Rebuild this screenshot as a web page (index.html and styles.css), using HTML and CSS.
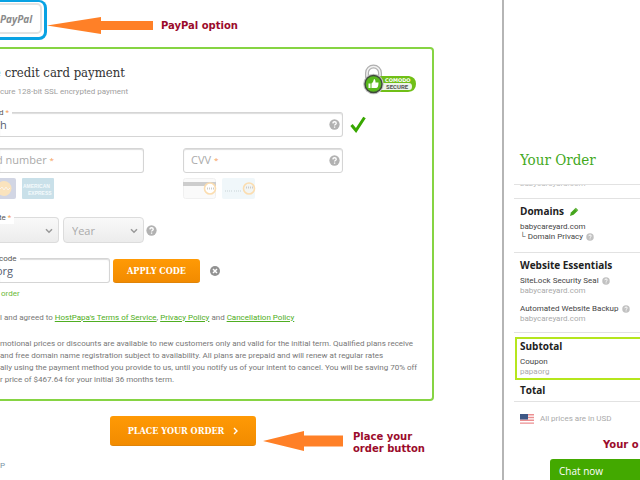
FILE: index.html
```
<!DOCTYPE html>
<html lang="en">
<head>
<meta charset="utf-8">
<title>Checkout</title>
<link rel="stylesheet" href="styles.css">
</head>
<body>
<svg class="defs" aria-hidden="true">
  <symbol id="help" viewBox="0 0 12 12"><circle cx="6" cy="6" r="5.6" fill="#b2b2b2"/><path d="M4.2 4.8Q4.3 3 6.1 3 7.9 3 7.9 4.5 7.9 5.4 6.9 6 6.1 6.4 6.1 7.2M6.1 8.2V9.5" fill="none" stroke="#fff" stroke-width="1.5"/></symbol>
  <symbol id="chevron" viewBox="0 0 8 6"><path d="M1 1.2 4 4.2 7 1.2" fill="none" stroke="#999" stroke-width="1.5"/></symbol>
</svg>
<div class="page">
  <main class="checkout">
    <div class="methods">
      <div class="highlight"><button class="paypal" type="button">PayPal</button></div>
      <svg class="arrow-top" viewBox="0 0 106 18" aria-hidden="true"><path d="M0 8.5 54 0V4H106V13H54V17Z" fill="#ff8027"/></svg>
      <strong class="note">PayPal option</strong>
    </div>
    <form class="card">
      <header class="card-head">
        <div>
          <h1><span class="tail">e</span> credit card payment</h1>
          <p class="sub">cure 128-bit SSL encrypted payment</p>
        </div>
        <svg class="badge" viewBox="0 0 54 32" role="img" aria-label="Comodo Secure">
          <path d="M4 16V9a6.500 6.500 0 0 1 13 0v7" fill="none" stroke="#b0b0b0" stroke-width="4"/>
          <path d="M4 16V9a6.500 6.500 0 0 1 13 0v7" fill="none" stroke="#f2f2f2" stroke-width="1.500"/>
          <path d="M12 12H46Q53 13 53 20T45 28H12Z" fill="#70bf17"/>
          <path d="M17 19H46Q49 19 49 22.500T46 26H17Z" fill="#eef4e9"/>
          <circle cx="10.500" cy="20" r="10.300" fill="#c3c3c3"/>
          <circle cx="10.500" cy="20" r="9.200" fill="#3e493b"/>
          <circle cx="10.500" cy="20" r="7.800" fill="#58b81d"/>
          <path d="M5.500 19.500H7.500V24H5.500ZM8.500 19.500 10 18 11 15Q12.500 15 12.500 18.500H15.500Q15.500 24 13 24H8.500Z" fill="#fff"/>
          <text x="22" y="18" class="badge-top">COMODO</text>
          <text x="23" y="25" class="badge-low">SECURE</text>
        </svg>
      </header>

      <div class="row">
        <div class="field wide">
          <input id="name" type="text" value="th">
          <label class="notch" for="name">d <i>*</i></label>
          <svg class="help inside"><use href="#help"/></svg>
        </div>
        <svg class="tick" viewBox="0 0 16 17" aria-hidden="true"><path d="M1.500 9 6 14.500 14.500 1.500" fill="none" stroke="#38a700" stroke-width="3"/></svg>
      </div>

      <div class="row pair">
        <div class="field number">
          <input id="number" type="text">
          <label class="hint" for="number">d number <i>*</i></label>
        </div>
        <div class="field cvv">
          <input id="cvv" type="text">
          <label class="hint" for="cvv">CVV <i>*</i></label>
          <svg class="help inside"><use href="#help"/></svg>
        </div>
      </div>

      <div class="row brands">
        <svg class="mc" viewBox="0 0 16 21" aria-hidden="true"><path d="M0 0H14Q16 0 16 2V19Q16 21 14 21H0Z" fill="#d2d6e4"/><circle cx="-2" cy="10.500" r="7" fill="#f3c0bd"/><circle cx="4" cy="10.500" r="7.500" fill="#fae3bd"/><path d="M0 11 2 9 4 12 6 9 8 12 10 10" fill="none" stroke="#fbf3ea"/></svg>
        <svg class="amex" viewBox="0 0 32 21" aria-hidden="true"><rect width="32" height="21" rx="1" fill="#c9e0e9"/><text x="1" y="10">AMERICAN</text><text x="6" y="17">EXPRESS</text></svg>
        <svg class="back" viewBox="0 0 35 21" aria-hidden="true"><rect x=".5" y=".5" width="32" height="20" rx="2" fill="#fafafa" stroke="#f0f0f0"/><path d="M0 4H33V8H0Z" fill="#cdcdcd"/><circle cx="27" cy="10.500" r="5.500" fill="#fff" stroke="#fbddb0" stroke-width="1.600"/><path d="M24 10.500H31" stroke="#ccc" stroke-width="2" stroke-dasharray="1"/></svg>
        <svg class="back" viewBox="0 0 35 21" aria-hidden="true"><rect width="33" height="21" rx="2" fill="#f0f7fa"/><path d="M3 13H10M12 13H20" stroke="#dce5e8" stroke-width="2" stroke-dasharray="1"/><circle cx="27" cy="10.500" r="5.500" fill="#f2f5f3" stroke="#fbddb0" stroke-width="1.600"/><path d="M24 9.500H31" stroke="#ccc" stroke-width="2" stroke-dasharray="1"/></svg>
      </div>

      <div class="row dates">
        <div class="field month">
          <select id="month"><option></option></select>
          <label class="notch" for="month">te <i>*</i></label>
          <svg class="chev"><use href="#chevron"/></svg>
        </div>
        <div class="field year">
          <select aria-label="Year"><option>Year</option></select>
          <svg class="chev"><use href="#chevron"/></svg>
        </div>
        <svg class="help"><use href="#help"/></svg>
      </div>

      <div class="row coupon">
        <div class="field code">
          <input id="coupon" type="text" value="org">
          <label class="notch" for="coupon">code</label>
        </div>
        <button class="cta apply" type="button">APPLY CODE</button>
        <button class="clear" type="button" aria-label="Remove code"><svg viewBox="0 0 10 10"><circle cx="5" cy="5" r="5" fill="#929292"/><path d="M3 3 7 7M7 3 3 7" stroke="#fff" stroke-width="1.500"/></svg></button>
      </div>
      <p class="applied">order</p>
      <p class="terms">l and agreed to <a href="#">HostPapa's Terms of Service</a>, <a href="#">Privacy Policy</a> and <a href="#">Cancellation Policy</a></p>
      <p class="legal">motional prices or discounts are available to new customers only and valid for the initial term. Qualified plans receive<br>and free domain name registration subject to availability. All plans are prepaid and will renew at regular rates<br>ally using the payment method you provide to us, until you notify us of your intent to cancel. You will be saving 70% off<br>r price of $467.64 for your initial 36 months term.</p>
    </form>
    <div class="submit">
      <button class="cta place" type="button">PLACE YOUR ORDER <svg viewBox="0 0 5 8"><path d="M1 1 4 4 1 7" fill="none" stroke="#fff" stroke-width="1.400"/></svg></button>
      <svg class="arrow-low" viewBox="0 0 80 20" aria-hidden="true"><path d="M0 10 41 0V4.500H80V15.500H41V20Z" fill="#ff8027"/></svg>
      <strong class="note">Place your<br>order button</strong>
    </div>
    <p class="stub">P</p>
  </main>

  <aside class="order">
    <h2>Your Order</h2>
    <div class="scrolled"><span>babycareyard.com</span></div>
    <section class="domains">
      <h3>Domains <svg class="pencil" viewBox="0 0 10 10"><path d="M0 10 1 6 6.500 .8 9.200 3.500 4 8.700Z" fill="#44a51c"/><path d="M5.500 1.500 8.500 4.500" stroke="#b9e0a8" stroke-width=".6"/></svg></h3>
      <p>babycareyard.com</p>
      <p>└ Domain Privacy <svg class="mini"><use href="#help"/></svg></p>
    </section>
    <section class="essentials">
      <h3>Website Essentials</h3>
      <p>SiteLock Security Seal <svg class="mini"><use href="#help"/></svg></p>
      <p class="muted">babycareyard.com</p>
      <p class="next">Automated Website Backup <svg class="mini"><use href="#help"/></svg></p>
      <p class="muted">babycareyard.com</p>
    </section>
    <section class="subtotal">
      <h3>Subtotal</h3>
      <p>Coupon</p>
      <p class="muted">papaorg</p>
    </section>
    <section class="total"><h3>Total</h3></section>
    <p class="currency"><svg class="flag" viewBox="0 0 14 10"><path fill="#fff" d="M0 0H14V10H0Z"/><path d="M0 .7H14M0 3.500H14M0 6.300H14M0 9.100H14" stroke="#ec8f91" stroke-width="1.400"/><path fill="#3e5785" d="M0 0H8V5.500H0Z"/></svg>All prices are in USD</p>
    <strong class="note">Your o</strong>
    <button class="chat" type="button">Chat now</button>
  </aside>
</div>
</body>
</html>
```
FILE: styles.css
```
* { box-sizing: border-box; }
body { margin: 0; background: #fff; color: #777; font-family: Roboto, sans-serif; font-size: 8px; }
h1, h2, h3, p { margin: 0; }
svg { display: block; flex: none; }
button, input, select { font: inherit; margin: 0; }
i { color: #f5a05a; font-style: normal; }
.defs { position: absolute; width: 0; height: 0; }
.page { display: flex; height: 100vh; overflow: hidden; }
.checkout { flex: 1; min-width: 0; white-space: nowrap; }
.note { color: #9b0b2b; font: bold 10px/12px "DejaVu Sans", sans-serif; }

.methods { display: flex; align-items: center; height: 47px; padding-bottom: 7px; }
.highlight { width: 47px; height: 40px; border: solid #09a2e3; border-width: 2px 3px 3px 0; border-radius: 0 8px 8px 0; padding: 1px 2px 3px 0; }
.paypal { width: 100%; height: 100%; padding: 0; text-align: left; background: #fff; border: 2px solid #e3e3e3; border-left: 0; border-radius: 0 5px 5px 0; color: #8b8b8b; font: italic bold 10px "Open Sans", sans-serif; }
.arrow-top { width: 106px; height: 18px; margin-top: 11px; }
.methods .note { margin: 11px 0 0 8px; }

.card { width: 434px; max-width: 100%; height: 354px; border: 2px solid #86d443; border-left: 0; border-radius: 0 4px 4px 0; }
.card-head { display: flex; justify-content: space-between; height: 63px; padding: 14px 15px 0 0; }
h1 { color: #333; font: 13px/20px "DejaVu Serif Condensed", "DejaVu Serif", serif; margin-left: -6px; }
.tail { color: #8fc6e8; }
.sub { color: #a0a0a0; line-height: 12px; margin-top: 3px; }
.badge { width: 54px; height: 32px; margin-top: 1px; }
.badge-top { fill: #fff; font: bold 5px "DejaVu Sans", sans-serif; }
.badge-low { fill: #555; font: bold 6px Roboto, sans-serif; }

.row { display: flex; align-items: center; }
.field { position: relative; height: 25px; }
.field input { width: 100%; height: 100%; padding: 0 8px 0 0; background: #fff; border: 1px solid #d5d5d5; border-left: 0; border-radius: 0 3px 3px 0; box-shadow: inset 0 1px 1px #ddd; color: #566070; font-family: "Open Sans", sans-serif; font-size: 11px; text-indent: -4px; outline: 0; }
.wide { width: 343px; }
.notch { position: absolute; left: -1px; top: -5px; padding-right: 3px; line-height: 12px; background: #fff; color: #555; }
.hint { position: absolute; left: -4px; top: 4px; color: #aaa; font-family: "Open Sans", sans-serif; font-size: 11px; line-height: 15px; }
.hint i { font-size: 8px; vertical-align: 1px; }
.help { width: 11px; height: 11px; }
.inside { position: absolute; right: 3px; top: 7px; }
.tick { width: 16px; height: 17px; margin-left: 7px; }
.pair { margin-top: 11px; gap: 39px; }
.number { width: 144px; }
.cvv { width: 160px; }
.cvv input { border-left: 1px solid #d5d5d5; border-radius: 3px; }
.cvv .hint { left: 8px; }

.brands { margin-top: 5px; height: 21px; }
.mc { width: 16px; height: 21px; margin-right: 6px; }
.amex { width: 32px; height: 21px; margin-right: 129px; }
.amex text { fill: #f4fafc; font: bold 5px "Liberation Sans", sans-serif; }
.back { width: 35px; height: 21px; margin-right: 4px; }

.dates { margin-top: 18px; gap: 2px; }
.dates .field { height: 26px; }
.month { width: 59px; margin-right: 2px; }
.year { width: 81px; }
.field select { appearance: none; width: 100%; height: 100%; padding: 0 8px; border: 1px solid #dcdcdc; border-radius: 4px; background: linear-gradient(#f9f9f9, #ececec); color: #aaa; font-family: "Open Sans", sans-serif; font-size: 11px; }
.month select { border-left: 0; border-radius: 0 4px 4px 0; }
.chev { position: absolute; right: 6px; top: 11px; width: 8px; height: 6px; pointer-events: none; }

.coupon { margin-top: 15px; }
.code { width: 110px; }
.cta { padding: 0; border: 0; border-bottom: 1px solid #e08408; border-radius: 3px; background: linear-gradient(#ff9a05, #f28b00); color: #fff; font: bold 9px "DejaVu Serif Condensed", "DejaVu Serif", serif; }
.apply { width: 87px; height: 24px; margin: 1px 10px 0 3px; }
.clear { width: 10px; height: 10px; padding: 0; border: 0; background: none; }
.applied { margin: 5px 0 0 1px; color: #6cb93a; line-height: 12px; }
.terms { margin-top: 12px; line-height: 12px; }
.terms a { color: #4fae22; }
.legal { margin-top: 14px; line-height: 12px; }

.submit { display: flex; margin: 15px 0 0 110px; }
.place { display: flex; align-items: center; justify-content: center; gap: 9px; width: 146px; height: 30px; }
.place svg { width: 5px; height: 8px; }
.arrow-low { width: 80px; height: 20px; margin: 15px 10px 0 7px; }
.submit .note { margin-top: 15px; }
.stub { margin-top: 5px; color: #7a95a5; line-height: 12px; }

.order { width: 138px; padding: 150px 0 0 10px; border-left: 2px solid #b5b5b5; white-space: nowrap; color: #444; }
.order h2 { margin-left: 6px; height: 34px; color: #43a91c; font: 15px/20px "DejaVu Serif Condensed", "DejaVu Serif", serif; }
.order h3 { display: flex; align-items: center; gap: 6px; color: #222; font-family: "Open Sans", sans-serif; font-size: 10px; line-height: 14px; }
.order section { padding-left: 6px; }
.order section p { display: flex; align-items: center; gap: 3px; line-height: 10px; }
.order .muted { color: #aaa; }
.scrolled { height: 15px; overflow: hidden; border: solid #e2e2e2; border-width: 1px 0; padding-left: 6px; color: #bbb; line-height: 10px; }
.scrolled span { display: block; margin-top: -6px; }
.mini { width: 8px; height: 8px; opacity: .8; }
.pencil { width: 9px; height: 9px; }
.domains { padding-top: 5px; height: 54px; border-bottom: 1px solid #e2e2e2; }
.domains h3 { margin-bottom: 4px; }
.essentials { padding-top: 5px; height: 80px; border-bottom: 1px solid #e2e2e2; }
.essentials h3 { margin-bottom: 4px; }
.essentials .next { margin-top: 8px; }
.order .subtotal { margin: 4px 0 0 1px; height: 43px; padding: 0 0 0 3px; border: 2px solid #b5e61d; border-right: 0; }
.subtotal h3 { margin-bottom: 4px; }
.total { padding-top: 3px; height: 22px; border-bottom: 1px solid #e2e2e2; }
.currency { display: flex; align-items: center; gap: 6px; margin: 11px 0 0 6px; color: #aaa; line-height: 12px; }
.flag { width: 14px; height: 10px; }
.order .note { display: block; margin: 14px 0 0 89px; }
.chat { display: block; width: 90px; height: 24px; margin: 8px 0 0 36px; padding: 0 9px; border: 0; border-radius: 3px 0 0 0; background: #43a900; color: #fff; font-family: "Open Sans", sans-serif; font-size: 10px; text-align: left; }
```
